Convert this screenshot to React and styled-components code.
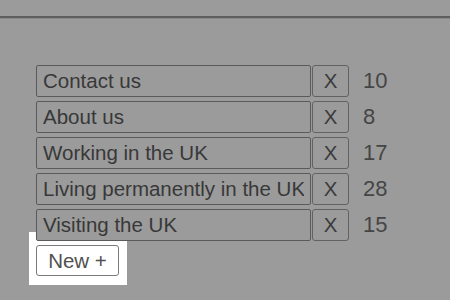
import React from "react";
import styled, { createGlobalStyle } from "styled-components";

const GlobalStyle = createGlobalStyle`
  html, body {
    margin: 0;
    padding: 0;
    background: #9b9b9b;
    font-family: "Liberation Sans", Arial, sans-serif;
  }
`;

const TopBar = styled.div`
  height: 16px;
  border-bottom: 2px solid #5e5e5e;
  box-shadow: 0 1px 0 #8a8a8a;
`;

const Content = styled.div`
  padding: 47px 0 0 36px;
`;

const List = styled.div`
  position: relative;
  z-index: 1;
  display: flex;
  flex-direction: column;
  gap: 4px;
`;

const Row = styled.div`
  display: flex;
  align-items: center;
  height: 32px;
`;

const TitleInput = styled.input`
  box-sizing: border-box;
  width: 275px;
  height: 32px;
  padding: 0 6px;
  background: #9b9b9b;
  border: 1.5px solid #5a5a5a;
  border-radius: 2px;
  font-family: "Liberation Sans", Arial, sans-serif;
  font-size: 20.5px;
  color: #383838;
  outline: none;
`;

const RemoveButton = styled.button`
  box-sizing: border-box;
  width: 37px;
  height: 32px;
  margin-left: 1px;
  padding: 0;
  background: #9b9b9b;
  border: 1.5px solid #626262;
  border-radius: 3px;
  font-family: "Liberation Sans", Arial, sans-serif;
  font-size: 20.5px;
  color: #3c3c3c;
`;

const Count = styled.span`
  margin-left: 14px;
  font-size: 22px;
  color: #454545;
`;

const Spotlight = styled.div`
  display: inline-block;
  margin: -9px 0 0 -7px;
  padding: 13px 8px 9px 7px;
  background: #ffffff;
`;

const NewButton = styled.button`
  box-sizing: border-box;
  width: 83px;
  height: 31px;
  padding: 0;
  background: #ffffff;
  border: 1.5px solid #7a7a7a;
  border-radius: 3px;
  font-family: "Liberation Sans", Arial, sans-serif;
  font-size: 20.5px;
  color: #505050;
`;

const items = [
  { title: "Contact us", count: 10 },
  { title: "About us", count: 8 },
  { title: "Working in the UK", count: 17 },
  { title: "Living permanently in the UK", count: 28 },
  { title: "Visiting the UK", count: 15 },
];

export default function App() {
  return (
    <>
      <GlobalStyle />
      <TopBar />
      <Content>
        <List>
          {items.map((item) => (
            <Row key={item.title}>
              <TitleInput defaultValue={item.title} />
              <RemoveButton>X</RemoveButton>
              <Count>{item.count}</Count>
            </Row>
          ))}
        </List>
        <Spotlight>
          <NewButton>New +</NewButton>
        </Spotlight>
      </Content>
    </>
  );
}
